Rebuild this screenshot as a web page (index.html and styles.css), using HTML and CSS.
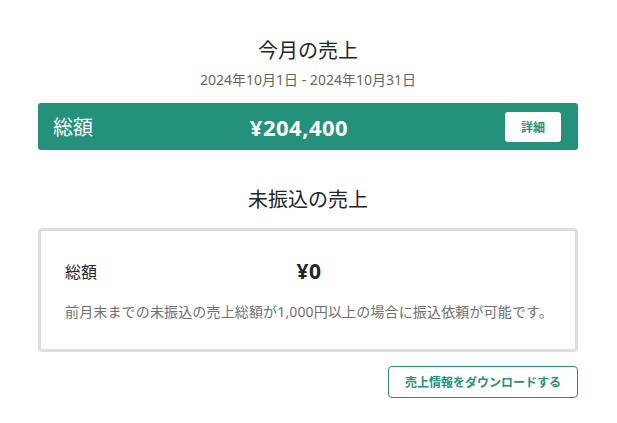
FILE: index.html
```html
<!DOCTYPE html>
<html lang="ja">
<head>
    <meta charset="UTF-8">
    <meta name="viewport" content="width=device-width, initial-scale=1.0">
    <title>売上</title>
    <link rel="stylesheet" href="styles.css">
</head>
<body>
    <div class="container">
        <!-- 今月の売上 -->
        <div class="section-head">
            <h1>今月の売上</h1>
            <div class="period">2024年10月1日 - 2024年10月31日</div>
        </div>
        <div class="total-bar">
            <span class="total-label">総額</span>
            <span class="total-amount">¥204,400</span>
            <button class="detail-btn">詳細</button>
        </div>

        <!-- 未振込の売上 -->
        <h2>未振込の売上</h2>
        <div class="unpaid-box">
            <div class="unpaid-row">
                <span class="unpaid-label">総額</span>
                <span class="unpaid-amount">¥0</span>
                <span></span>
            </div>
            <p class="note">前月末までの未振込の売上総額が1,000円以上の場合に振込依頼が可能です。</p>
        </div>

        <div class="actions">
            <button class="download-btn">売上情報をダウンロードする</button>
        </div>
    </div>
</body>
</html>
```

FILE: styles.css
```css
body {
    font-family: "Noto Sans", "Noto Sans CJK JP", sans-serif;
    background-color: #ffffff;
    color: #212529;
    margin: 0;
}
.container {
    width: 540px;
    margin: 0 38px;
    padding-top: 37px;
}
.section-head {
    text-align: center;
}
h1, h2 {
    font-size: 20px;
    font-weight: normal;
    line-height: 28px;
    margin: 0;
    text-align: center;
}
.period {
    font-size: 14px;
    line-height: 20px;
    color: #666;
    margin-top: 5px;
}
.total-bar {
    display: flex;
    align-items: center;
    background-color: #24917a;
    color: #ffffff;
    border-radius: 3px;
    height: 47px;
    padding: 0 17px 0 15px;
    margin-top: 13px;
}
.total-label {
    font-size: 20px;
}
.total-amount {
    flex: 1;
    text-align: center;
    font-size: 22px;
    font-weight: bold;
    letter-spacing: 0.5px;
}
.detail-btn {
    width: 56px;
    height: 30px;
    border: none;
    border-radius: 3px;
    background-color: #ffffff;
    color: #24917a;
    font-family: inherit;
    font-size: 12px;
    font-weight: bold;
    cursor: pointer;
}
h2 {
    margin-top: 36px;
}
.unpaid-box {
    border: 3px solid #dddddd;
    border-radius: 4px;
    margin-top: 14px;
    padding: 26px 22px 28px 24px;
}
.unpaid-row {
    display: grid;
    grid-template-columns: 1fr auto 1fr;
    align-items: center;
}
.unpaid-label {
    font-size: 16px;
}
.unpaid-amount {
    font-size: 21px;
    font-weight: bold;
    letter-spacing: 0.5px;
}
.note {
    font-size: 14px;
    letter-spacing: 0.15px;
    white-space: nowrap;
    color: #6f6f6f;
    margin: 16px 0 0;
}
.actions {
    display: flex;
    justify-content: flex-end;
    margin-top: 14px;
}
.download-btn {
    width: 190px;
    height: 32px;
    border: 1px solid #24917a;
    border-radius: 4px;
    background-color: #ffffff;
    color: #24917a;
    font-family: inherit;
    font-size: 12px;
    font-weight: bold;
    cursor: pointer;
}
```
